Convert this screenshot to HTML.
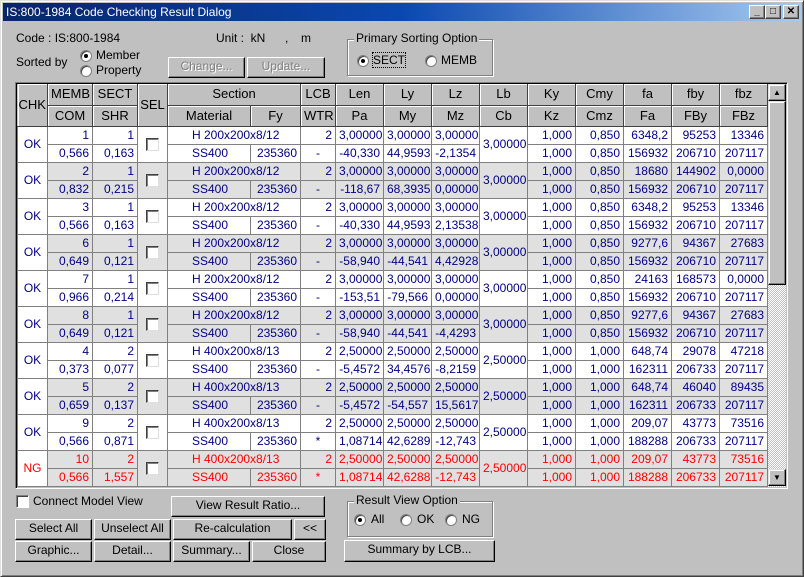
<!DOCTYPE html>
<html><head><meta charset="utf-8"><style>
*{box-sizing:border-box;margin:0;padding:0}
body{width:804px;height:577px;background:#c0c0c0;font-family:"Liberation Sans","Noto Sans CJK KR",sans-serif;font-size:12px;color:#000;position:relative;overflow:hidden}
.a{position:absolute;white-space:nowrap}
.win{position:absolute;left:0;top:0;width:804px;height:577px;border:1px solid #dfdfdf;border-right-color:#404040;border-bottom-color:#404040;box-shadow:inset 1px 1px #fff,inset -1px -1px #808080}
.title{position:absolute;left:3px;top:3px;width:798px;height:18px;background:linear-gradient(90deg,#0a246a,#0a48b0 50%,#a6caf0);color:#fff;font-size:12px;line-height:18px;padding-left:3px}
.tb{position:absolute;top:5px;width:16px;height:14px;background:#c0c0c0;border:1px solid;border-color:#fff #404040 #404040 #fff;box-shadow:inset -1px -1px #808080;font-size:10px;line-height:11px;text-align:center;color:#000;font-weight:bold}
.btn{position:absolute;background:#c0c0c0;border:1px solid;border-color:#fff #000 #000 #fff;box-shadow:inset -1px -1px #808080;text-align:center;line-height:17px;font-size:12px}
.dis{color:#808080;text-shadow:1px 1px #fff}
.rad{position:absolute;width:12px;height:12px;border-radius:50%;background:#fff;border:1px solid #808080;box-shadow:inset 1px 1px #404040}
.rad.on::after{content:"";position:absolute;left:3px;top:3px;width:4px;height:4px;border-radius:50%;background:#000}
.grp{position:absolute;border:1px solid #808080;box-shadow:1px 1px #fff,inset 1px 1px #fff}
.grp span{position:absolute;top:-9px;left:6px;background:#c0c0c0;padding:0 2px}
.cb{position:absolute;width:13px;height:13px;background:#fff;border:1px solid;border-color:#808080 #fff #fff #808080;box-shadow:inset 1px 1px #404040}
.frame{position:absolute;left:15px;top:82px;width:773px;height:407px;border:1px solid;border-color:#808080 #fff #fff #808080;box-shadow:inset 1px 1px #000}
table{position:absolute;left:17px;top:84px;width:751px;border-collapse:collapse;table-layout:fixed}
td,th{height:18px;padding:0 3px;white-space:nowrap;overflow:hidden;font-weight:normal;line-height:16px}
th{background:#c0c0c0;border-right:1px solid #404040;border-bottom:1px solid #404040;box-shadow:inset 1px 1px #fff;text-align:center;height:21px;font-size:13px}
td{border:1px solid #808080;color:#000080;text-align:right;font-size:12px;background:#fff}
tr.g td{background:#e0e0e0}
td.w{background:#fff!important;text-align:center}
tr.n td{color:#ff0000}
td.c{text-align:center}
td.m{text-align:left;padding-left:24px}
td.l{text-align:left;padding-left:24px}
.chk{display:inline-block;width:13px;height:13px;background:#fff;border:1px solid #404040;border-right-color:#dfdfdf;border-bottom-color:#dfdfdf;box-shadow:inset 1px 1px #808080;vertical-align:middle}
.sb{position:absolute;left:768px;top:84px;width:18px;height:403px;background:repeating-conic-gradient(#c0c0c0 0 25%,#fff 0 50%) 0 0/2px 2px}
.sbb{position:absolute;left:0;width:18px;height:17px;background:#c0c0c0;border:1px solid;border-color:#dfdfdf #000 #000 #dfdfdf;box-shadow:inset -1px -1px #808080,inset 1px 1px #fff;font-size:8px;text-align:center;line-height:15px}
</style></head><body>
<div class="win"></div>
<div class="title">IS:800-1984 Code Checking Result Dialog</div>
<div class="tb" style="left:749px">_</div><div class="tb" style="left:765px">□</div><div class="tb" style="left:783px">✕</div>

<div class="a" style="left:16px;top:31px">Code : IS:800-1984</div>
<div class="a" style="left:216px;top:31px">Unit :&nbsp; kN</div>
<div class="a" style="left:285px;top:31px">,</div>
<div class="a" style="left:301px;top:31px">m</div>
<div class="a" style="left:16px;top:55px">Sorted by</div>
<div class="rad on" style="left:80px;top:50px"></div><div class="a" style="left:96px;top:48px">Member</div>
<div class="rad" style="left:80px;top:65px"></div><div class="a" style="left:96px;top:63px">Property</div>
<div class="btn dis" style="left:168px;top:57px;width:77px;height:21px">Change...</div>
<div class="btn dis" style="left:247px;top:57px;width:78px;height:21px">Update...</div>
<div class="grp" style="left:347px;top:39px;width:146px;height:37px"><span>Primary Sorting Option</span></div>
<div class="rad on" style="left:357px;top:55px"></div><div class="a" style="left:373px;top:53px;outline:1px dotted #000">SECT</div>
<div class="rad" style="left:425px;top:55px"></div><div class="a" style="left:441px;top:53px">MEMB</div>

<div class="frame"></div>
<table>
<colgroup><col style="width:30px"><col style="width:45px"><col style="width:45px"><col style="width:30px"><col style="width:83px"><col style="width:50px"><col style="width:35px"><col style="width:48px"><col style="width:48px"><col style="width:48px"><col style="width:48px"><col style="width:48px"><col style="width:48px"><col style="width:48px"><col style="width:48px"><col style="width:48px"></colgroup>
<tr><th rowspan="2" style="padding:0">CHK</th><th>MEMB</th><th>SECT</th><th rowspan="2" style="padding:0">SEL</th><th colspan="2">Section</th><th>LCB</th><th>Len</th><th>Ly</th><th>Lz</th><th>Lb</th><th>Ky</th><th>Cmy</th><th>fa</th><th>fby</th><th>fbz</th></tr>
<tr><th>COM</th><th>SHR</th><th>Material</th><th>Fy</th><th>WTR</th><th>Pa</th><th>My</th><th>Mz</th><th>Cb</th><th>Kz</th><th>Cmz</th><th>Fa</th><th>FBy</th><th>FBz</th></tr>
<tbody id="b"></tbody>
</table>
<div class="sb"><div class="sbb" style="top:0">▲</div><div class="sbb" style="top:17px;height:184px;font-size:0"></div><div class="sbb" style="top:385px">▼</div></div>

<div class="cb" style="left:16px;top:495px"></div><div class="a" style="left:33px;top:494px">Connect Model View</div>
<div class="btn" style="left:171px;top:496px;width:154px;height:21px">View Result Ratio...</div>
<div class="btn" style="left:15px;top:519px;width:77px;height:21px">Select All</div>
<div class="btn" style="left:94px;top:519px;width:77px;height:21px">Unselect All</div>
<div class="btn" style="left:173px;top:519px;width:119px;height:21px">Re-calculation</div>
<div class="btn" style="left:294px;top:519px;width:32px;height:21px">&lt;&lt;</div>
<div class="btn" style="left:15px;top:541px;width:77px;height:21px">Graphic...</div>
<div class="btn" style="left:94px;top:541px;width:77px;height:21px">Detail...</div>
<div class="btn" style="left:173px;top:541px;width:77px;height:21px">Summary...</div>
<div class="btn" style="left:252px;top:541px;width:74px;height:21px">Close</div>
<div class="grp" style="left:347px;top:501px;width:146px;height:36px"><span>Result View Option</span></div>
<div class="rad on" style="left:354px;top:514px"></div><div class="a" style="left:371px;top:512px">All</div>
<div class="rad" style="left:400px;top:514px"></div><div class="a" style="left:417px;top:512px">OK</div>
<div class="rad" style="left:445px;top:514px"></div><div class="a" style="left:462px;top:512px">NG</div>
<div class="btn" style="left:344px;top:540px;width:151px;height:22px">Summary by LCB...</div>

<script>
var H1="H 200x200x8/12",H2="H 400x200x8/13";
var d=[
["OK","1","1",H1,"2","3,00000","3,00000","3,00000","3,00000","1,000","0,850","6348,2","95253","13346","0,566","0,163","-","-40,330","44,9593","-2,1354","1,000","0,850","156932","206710","207117"],
["OK","2","1",H1,"2","3,00000","3,00000","3,00000","3,00000","1,000","0,850","18680","144902","0,0000","0,832","0,215","-","-118,67","68,3935","0,00000","1,000","0,850","156932","206710","207117"],
["OK","3","1",H1,"2","3,00000","3,00000","3,00000","3,00000","1,000","0,850","6348,2","95253","13346","0,566","0,163","-","-40,330","44,9593","2,13538","1,000","0,850","156932","206710","207117"],
["OK","6","1",H1,"2","3,00000","3,00000","3,00000","3,00000","1,000","0,850","9277,6","94367","27683","0,649","0,121","-","-58,940","-44,541","4,42928","1,000","0,850","156932","206710","207117"],
["OK","7","1",H1,"2","3,00000","3,00000","3,00000","3,00000","1,000","0,850","24163","168573","0,0000","0,966","0,214","-","-153,51","-79,566","0,00000","1,000","0,850","156932","206710","207117"],
["OK","8","1",H1,"2","3,00000","3,00000","3,00000","3,00000","1,000","0,850","9277,6","94367","27683","0,649","0,121","-","-58,940","-44,541","-4,4293","1,000","0,850","156932","206710","207117"],
["OK","4","2",H2,"2","2,50000","2,50000","2,50000","2,50000","1,000","1,000","648,74","29078","47218","0,373","0,077","-","-5,4572","34,4576","-8,2159","1,000","1,000","162311","206733","207117"],
["OK","5","2",H2,"2","2,50000","2,50000","2,50000","2,50000","1,000","1,000","648,74","46040","89435","0,659","0,137","-","-5,4572","-54,557","15,5617","1,000","1,000","162311","206733","207117"],
["OK","9","2",H2,"2","2,50000","2,50000","2,50000","2,50000","1,000","1,000","209,07","43773","73516","0,566","0,871","*","1,08714","42,6289","-12,743","1,000","1,000","188288","206733","207117"],
["NG","10","2",H2,"2","2,50000","2,50000","2,50000","2,50000","1,000","1,000","209,07","43773","73516","0,566","1,557","*","1,08714","42,6288","-12,743","1,000","1,000","188288","206733","207117"]];
var h="";
d.forEach(function(r,i){var cls=(i%2?"g":"")+(r[0]=="NG"?" n":"");
h+='<tr class="'+cls+'"><td rowspan="2" class="w" style="padding:0">'+r[0]+'</td><td>'+r[1]+'</td><td>'+r[2]+'</td><td rowspan="2" class="c" style="padding:0"><span class="chk"></span></td><td colspan="2" class="l">'+r[3]+'</td><td>'+r[4]+'</td><td>'+r[5]+'</td><td>'+r[6]+'</td><td>'+r[7]+'</td><td rowspan="2" class="c">'+r[8]+'</td><td>'+r[9]+'</td><td>'+r[10]+'</td><td>'+r[11]+'</td><td>'+r[12]+'</td><td>'+r[13]+'</td></tr>';
h+='<tr class="'+cls+'"><td>'+r[14]+'</td><td>'+r[15]+'</td><td class="m">SS400</td><td>235360</td><td class="c">'+r[16]+'</td><td>'+r[17]+'</td><td>'+r[18]+'</td><td>'+r[19]+'</td><td>'+r[20]+'</td><td>'+r[21]+'</td><td>'+r[22]+'</td><td>'+r[23]+'</td><td>'+r[24]+'</td></tr>';});
document.getElementById("b").innerHTML=h;
</script>
</body></html>
